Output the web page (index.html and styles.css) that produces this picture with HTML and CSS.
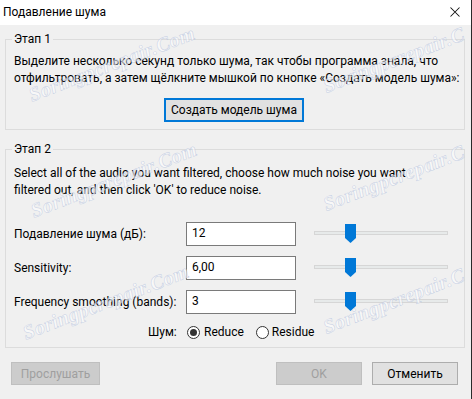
FILE: index.html
```html
<!DOCTYPE html>
<html lang="ru">
<head>
<meta charset="utf-8">
<title>Подавление шума</title>
<link rel="stylesheet" href="styles.css">
</head>
<body>
<div class="window">
  <div class="titlebar">
    <span class="title">Подавление шума</span>
    <svg class="close" width="10" height="10" viewBox="0 0 10 10"><path d="M0.5 0.5 L9.5 9.5 M9.5 0.5 L0.5 9.5" stroke="#111" stroke-width="1.05" fill="none"/></svg>
  </div>
  <div class="body">
    <fieldset class="group g1">
      <legend>Этап 1</legend>
      <p class="desc d1">Выделите несколько секунд только шума, так чтобы программа знала, что<br>отфильтровать, а затем щёлкните мышкой по кнопке «Создать модель шума»:</p>
      <div class="center"><button class="btn btn-focus">Создать модель шума</button></div>
    </fieldset>
    <fieldset class="group g2">
      <legend>Этап 2</legend>
      <p class="desc d2">Select all of the audio you want filtered, choose how much noise you want<br>filtered out, and then click 'OK' to reduce noise.</p>
      <div class="rows">
        <label class="lbl">Подавление шума (дБ):</label>
        <div class="input">12</div>
        <div class="slider"><div class="track"></div><svg class="thumb" width="11" height="19" viewBox="0 0 11 19"><path d="M0 0 H11 V14 L5.5 19 L0 14 Z" fill="#0078d7"/></svg></div>
        <label class="lbl">Sensitivity:</label>
        <div class="input">6,00</div>
        <div class="slider"><div class="track"></div><svg class="thumb" width="11" height="19" viewBox="0 0 11 19"><path d="M0 0 H11 V14 L5.5 19 L0 14 Z" fill="#0078d7"/></svg></div>
        <label class="lbl">Frequency smoothing (bands):</label>
        <div class="input">3</div>
        <div class="slider"><div class="track"></div><svg class="thumb" width="11" height="19" viewBox="0 0 11 19"><path d="M0 0 H11 V14 L5.5 19 L0 14 Z" fill="#0078d7"/></svg></div>
      </div>
      <div class="radios">
        <span class="rlabel">Шум:</span>
        <span class="radio checked"></span><span class="rtext">Reduce</span>
        <span class="radio r2"></span><span class="rtext">Residue</span>
      </div>
    </fieldset>
    <div class="footer">
      <button class="btn btn-disabled b-play">Прослушать</button>
      <div class="spacer"></div>
      <button class="btn btn-disabled b-ok">OK</button>
      <button class="btn b-cancel">Отменить</button>
    </div>
  </div>
  <div class="wm" style="left:112px;top:64px">Soringpcrepair.Com</div>
  <div class="wm" style="left:394px;top:60px">Soringpcrepair.C</div>
  <div class="wm" style="left:114px;top:180px">Soringpcrepair.Com</div>
  <div class="wm" style="left:394px;top:178px">Soringpcrepair.C</div>
  <div class="wm" style="left:106px;top:302px">Soringpcrepair.Com</div>
  <div class="wm" style="left:394px;top:301px">Soringpcrepair.C</div>
</div>
</body>
</html>
```
FILE: styles.css
```css
* { box-sizing: border-box; }
html, body { margin: 0; padding: 0; }
body {
  width: 472px;
  height: 399px;
  overflow: hidden;
  background: #f0f0f0;
  font-family: Roboto, "Noto Sans", sans-serif;
  font-size: 12px;
  color: #000;
}
.window {
  position: relative;
  width: 472px;
  height: 399px;
  border-right: 1px solid #2b2b2b;
  overflow: hidden;
}
.titlebar {
  height: 25px;
  background: #fff;
  display: flex;
  align-items: center;
  justify-content: space-between;
  padding: 0 11px 0 3px;
}
.title { line-height: 16px; padding-bottom: 1px; }
.close { display: block; margin-bottom: 1px; }
.body { padding: 6px 6px 0 5px; }
.group {
  margin: 0;
  border: 1px solid #dcdcdc;
  padding: 0 8px;
  min-width: 0;
}
legend {
  padding: 0 2px;
  margin-left: -2px;
  line-height: 16px;
}
.desc { margin: 0; white-space: nowrap; }
.d1 { margin-top: 6px; line-height: 17px; }
.d2 { margin-top: 8px; line-height: 16.5px; }
.center { display: flex; padding-left: 150px; margin-top: 11px; padding-bottom: 7px; }
.g2 { margin-top: 11px; padding-bottom: 7px; }
.btn {
  font-family: inherit;
  font-size: 12px;
  color: #000;
  background: #e1e1e1;
  border: 1px solid #adadad;
  height: 23px;
  padding: 0;
  margin: 0;
  line-height: 16px;
}
.btn-focus {
  width: 140px;
  height: 24px;
  border: 2px solid #0078d7;
}
.btn-disabled {
  background: #cccccc;
  border-color: #bfbfbf;
  color: #9f9f9f;
}
.rows {
  margin-top: 24px;
  display: grid;
  grid-template-columns: 172px 110px 134px;
  column-gap: 0;
  row-gap: 10px;
  align-items: center;
}
.rows .slider { margin-left: 18px; }
.lbl { line-height: 16px; }
.input {
  height: 24px;
  background: #fff;
  border: 1px solid #7a7a7a;
  padding: 0 5px;
  line-height: 21px;
}
.slider {
  position: relative;
  height: 24px;
  width: 134px;
}
.track {
  position: absolute;
  left: 0;
  right: 0;
  top: 9px;
  height: 4px;
  background: #e7eaea;
  border: 1px solid #d6d6d6;
}
.thumb {
  position: absolute;
  left: 31px;
  top: 2px;
}
.radios {
  margin-top: 10px;
  display: flex;
  align-items: center;
  padding-left: 134px;
  height: 16px;
}
.rlabel { width: 39px; }
.radio {
  width: 13px;
  height: 13px;
  border: 1px solid #333;
  border-radius: 50%;
  background: #fff;
  display: inline-flex;
  align-items: center;
  justify-content: center;
  margin-right: 4px;
}
.radio.checked::after {
  content: "";
  width: 7px;
  height: 7px;
  border-radius: 50%;
  background: #333;
}
.r2 { margin-left: 12px; margin-right: 3px; }
.footer {
  display: flex;
  margin-top: 14px;
  padding-left: 6px;
  padding-right: 7px;
}
.spacer { flex: 1; }
.b-play { width: 89px; }
.b-ok { width: 86px; margin-right: 10px; }
.b-cancel { width: 86px; }
.wm {
  position: absolute;
  transform: translate(-50%, -50%) rotate(-21deg);
  font-family: "Liberation Serif", serif;
  font-style: italic;
  font-weight: bold;
  font-size: 20px;
  letter-spacing: 0.5px;
  white-space: nowrap;
  color: rgba(255, 255, 255, 0.6);
  -webkit-text-stroke: 0.5px rgba(175, 188, 218, 0.7);
  pointer-events: none;
}
```
